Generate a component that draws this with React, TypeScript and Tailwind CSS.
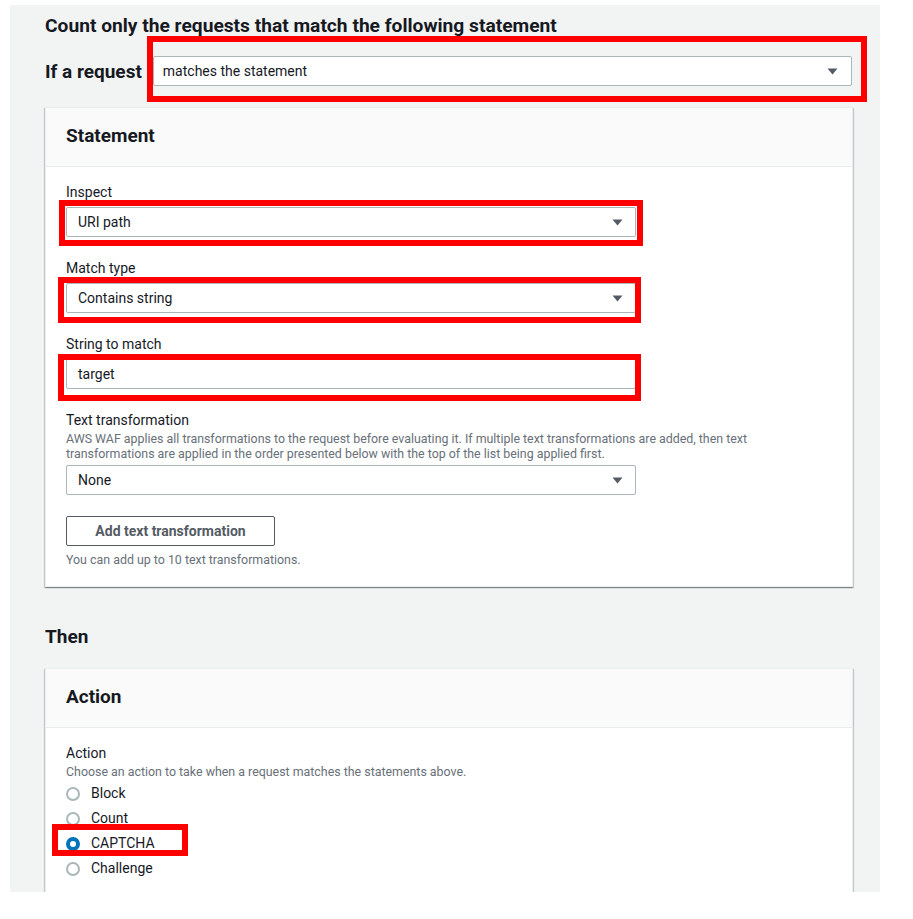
import React from "react"

function Caret() {
  return (
    <svg width="11" height="7" viewBox="0 0 11 7" className="shrink-0">
      <path d="M0.5 0.5h10l-5 6z" fill="#545b64" />
    </svg>
  )
}

// red annotation frame drawn over a control
function Frame({ pos }: { pos: string }) {
  return <span className={`pointer-events-none absolute border-[6px] border-[#ff0000] ${pos}`} />
}

function Select({ value, frame, caret = true }: { value: string; frame?: string; caret?: boolean }) {
  return (
    <div className="relative h-[30px] w-[570px]">
      <div className="flex h-full items-center justify-between rounded-[2px] border border-[#aab7b8] bg-white pl-[11px] pr-[12px] text-[14px] text-[#16191f]">
        <span>{value}</span>
        {caret && <Caret />}
      </div>
      {frame && <Frame pos={frame} />}
    </div>
  )
}

function Label({ children }: { children: React.ReactNode }) {
  return <div className="text-[14px] leading-[22px] text-[#16191f]">{children}</div>
}

function Card({ title, children }: { title: string; children: React.ReactNode }) {
  return (
    <div className="border border-[#eaeded] bg-white shadow-[0_1px_1px_0_rgba(0,28,36,0.3),1px_1px_1px_0_rgba(0,28,36,0.15),-1px_1px_1px_0_rgba(0,28,36,0.15)]">
      <div className="border-b border-[#eaeded] bg-[#fafafa] px-[20px] pt-[16px] pb-[19px] text-[19px] font-bold leading-[23px] text-[#16191f]">
        {title}
      </div>
      <div className="px-[20px] pt-[14px] pb-[19px]">{children}</div>
    </div>
  )
}

function Radio({ label, checked, framed }: { label: string; checked?: boolean; framed?: boolean }) {
  return (
    <div className="relative flex h-[25px] items-center">
      {checked ? (
        <span className="h-[14px] w-[14px] rounded-full border-[4px] border-[#0073bb] bg-white" />
      ) : (
        <span className="h-[14px] w-[14px] rounded-full border-2 border-[#aab7b8] bg-white" />
      )}
      <span className="ml-[11px] text-[14px] text-[#16191f]">{label}</span>
      {framed && <Frame pos="-left-[14px] -top-[7px] h-[32px] w-[136px]" />}
    </div>
  )
}

export default function App() {
  return (
    <div className="min-h-[919px] bg-white pt-[5px] [font-family:Roboto,'Liberation_Sans',Arial,sans-serif]">
      <div className="ml-[10px] h-[887px] w-[870px] overflow-hidden bg-[#f2f3f3] pt-[9px] pl-[35px] pr-[27px]">
        <h2 className="text-[19.2px] font-bold leading-[23px] text-[#16191f]">
          Count only the requests that match the following statement
        </h2>

        <div className="mt-[19px] flex items-center pr-[1px]">
          <span className="mr-[11px] text-[19px] font-bold leading-[23px] text-[#16191f]">If a request</span>
          <div className="relative h-[30px] flex-1">
            <div className="flex h-full items-center justify-between rounded-[2px] border border-[#aab7b8] bg-white pl-[9px] pr-[13px] text-[14px] text-[#16191f]">
              <span>matches the statement</span>
              <Caret />
            </div>
            <Frame pos="-left-[6px] -right-[15px] -top-[20px] -bottom-[16px]" />
          </div>
        </div>

        <div className="mt-[21px]">
          <Card title="Statement">
            <Label>Inspect</Label>
            <div className="mt-[4px]">
              <Select value="URI path" frame="-left-[7px] -right-[7px] -top-[7px] -bottom-[9px]" />
            </div>

            <div className="mt-[20px]">
              <Label>Match type</Label>
            </div>
            <div className="mt-[4px]">
              <Select value="Contains string" frame="-left-[8px] -right-[5px] -top-[6px] -bottom-[10px]" />
            </div>

            <div className="mt-[20px]">
              <Label>String to match</Label>
            </div>
            <div className="mt-[4px]">
              <Select value="target" caret={false} frame="-left-[8px] -right-[5px] -top-[5px] -bottom-[12px]" />
            </div>

            <div className="mt-[20px]">
              <Label>Text transformation</Label>
            </div>
            <p className="max-w-[720px] text-[12.4px] leading-[15px] text-[#687078]">
              AWS WAF applies all transformations to the request before evaluating it. If multiple text transformations are added, then text transformations are applied in the order presented below with the top of the list being applied first.
            </p>
            <div className="mt-[4px]">
              <Select value="None" />
            </div>

            <button className="mt-[21px] flex h-[30px] w-[209px] items-center justify-center rounded-[2px] border border-[#545b64] bg-white text-[14px] font-bold text-[#545b64]">
              Add text transformation
            </button>
            <p className="mt-[6px] text-[12.4px] leading-[15px] text-[#687078]">
              You can add up to 10 text transformations.
            </p>
          </Card>
        </div>

        <h2 className="mt-[38px] text-[19px] font-bold leading-[23px] text-[#16191f]">Then</h2>

        <div className="mt-[20px]">
          <Card title="Action">
            <Label>Action</Label>
            <p className="text-[12.4px] leading-[15px] text-[#687078]">
              Choose an action to take when a request matches the statements above.
            </p>
            <div className="mt-[2px]">
              <Radio label="Block" />
              <Radio label="Count" />
              <Radio label="CAPTCHA" checked framed />
              <Radio label="Challenge" />
            </div>
          </Card>
        </div>
      </div>
    </div>
  )
}
